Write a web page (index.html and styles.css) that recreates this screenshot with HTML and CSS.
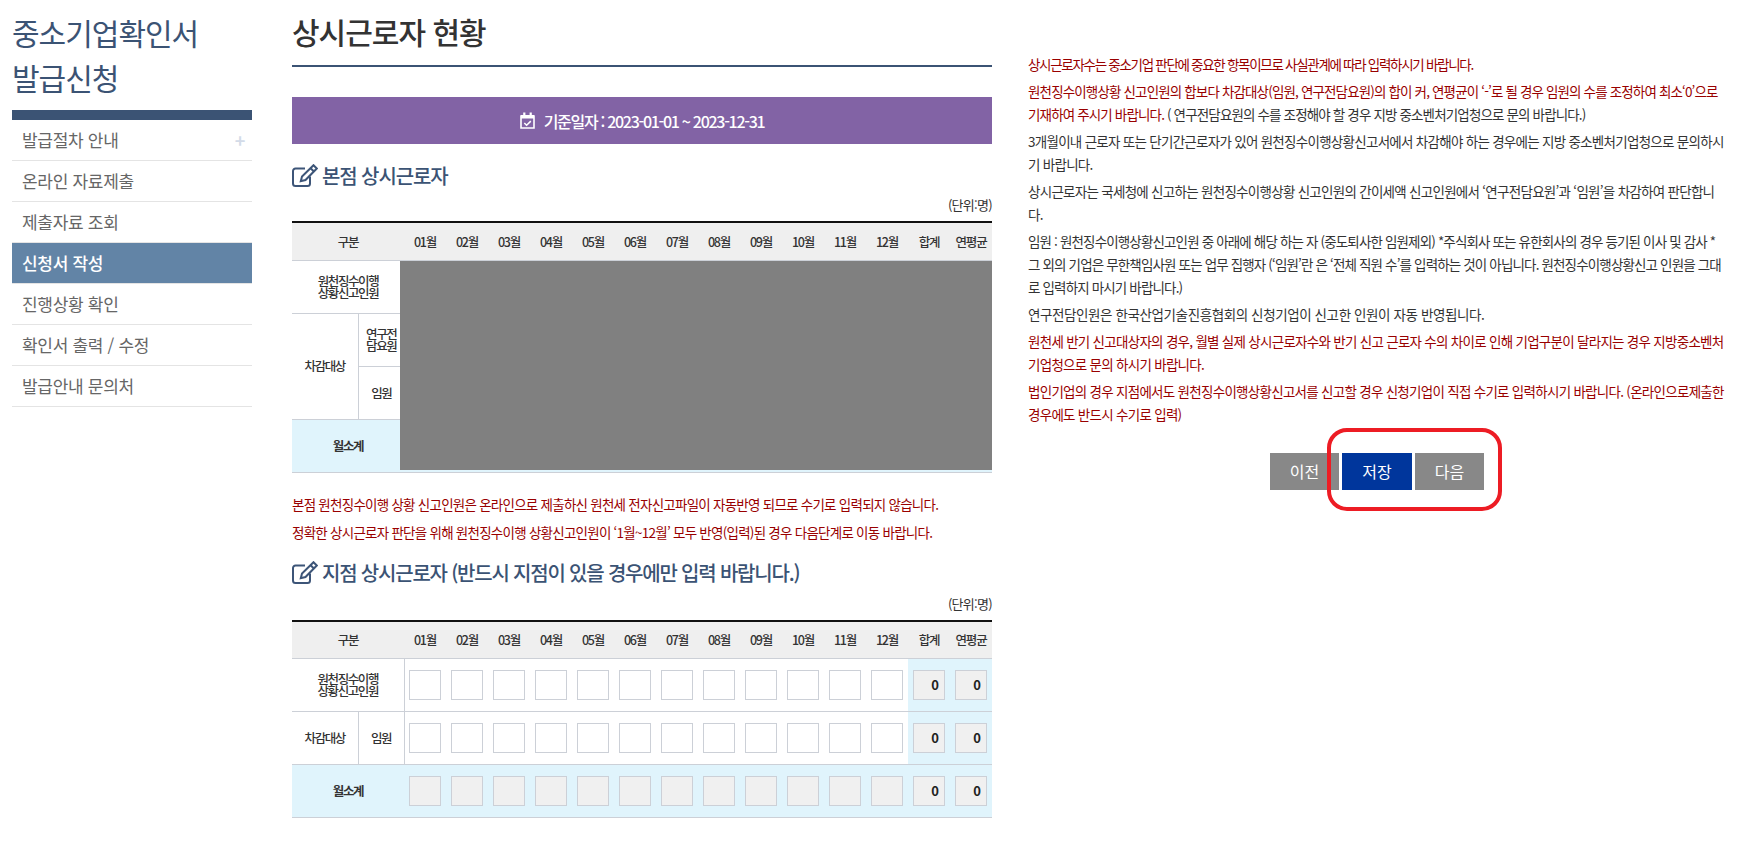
FILE: index.html
```html
<!DOCTYPE html>
<html lang="ko">
<head>
<meta charset="utf-8">
<title>상시근로자 현황</title>
<link rel="stylesheet" href="styles.css">
</head>
<body>
<div class="page">
  <aside class="side">
    <h2 class="side-title">중소기업확인서<br>발급신청</h2>
    <ul class="nav">
      <li class="nav-item has-plus">발급절차 안내<span class="plus">+</span></li>
      <li class="nav-item">온라인 자료제출</li>
      <li class="nav-item">제출자료 조회</li>
      <li class="nav-item active">신청서 작성</li>
      <li class="nav-item">진행상황 확인</li>
      <li class="nav-item">확인서 출력 / 수정</li>
      <li class="nav-item">발급안내 문의처</li>
    </ul>
  </aside>

  <main class="main">
    <h1 class="page-title">상시근로자 현황</h1>
    <div class="date-bar">
      <svg class="cal" viewBox="0 0 15 17" width="15" height="17"><path d="M1 4h13v12H1z" fill="none" stroke="#fff" stroke-width="1.600"/><path d="M1 3h13v3.500H1z M3.200 0.500h2.200v3.500H3.200z M9.600 0.500h2.200v3.500H9.600z" fill="#fff"/><path d="M4.300 11l2.300 2.300 4.200-4.200" fill="none" stroke="#fff" stroke-width="1.500"/></svg>
      <span>기준일자 : 2023-01-01 ~ 2023-12-31</span>
    </div>

    <h3 class="sec-title first"><svg class="edit" viewBox="0 0 26 23" width="26" height="23"><path d="M18 12.500v7a2.500 2.500 0 0 1-2.500 2.500H3.500A2.500 2.500 0 0 1 1 19.500V7A2.500 2.500 0 0 1 3.500 4.500H13" fill="none" stroke="#3d5578" stroke-width="2"/><path d="M21.500 1.200l3.300 3.300L13.500 16l-4.700 1.200 1.200-4.700z M18.600 4.200l3.300 3.300" fill="none" stroke="#3d5578" stroke-width="2"/></svg>본점 상시근로자</h3>
    <p class="unit">(단위:명)</p>
    <div class="table-wrap">
      <table class="grid">
        <colgroup><col class="c1"><col class="c3"><col span="14" class="cm"></colgroup>
        <thead><tr><th colspan="2">구분</th><th>01월</th><th>02월</th><th>03월</th><th>04월</th><th>05월</th><th>06월</th><th>07월</th><th>08월</th><th>09월</th><th>10월</th><th>11월</th><th>12월</th><th>합계</th><th>연평균</th></tr></thead>
        <tbody>
          <tr><td colspan="2" class="lab">원천징수이행<br>상황신고인원</td><td colspan="14"></td></tr>
          <tr><td rowspan="2" class="lab bd">차감대상</td><td class="lab">연구전<br>담요원</td><td colspan="14"></td></tr>
          <tr><td class="lab">임원</td><td colspan="14"></td></tr>
          <tr class="sum"><td colspan="2" class="lab strong">월소계</td><td colspan="14"></td></tr>
        </tbody>
      </table>
      <div class="mask"></div>
    </div>
    <p class="note n1">본점 원천징수이행 상황 신고인원은 온라인으로 제출하신 원천세 전자신고파일이 자동반영 되므로 수기로 입력되지 않습니다.</p>
    <p class="note n2">정확한 상시근로자 판단을 위해 원천징수이행 상황신고인원이 ‘1월~12월’ 모두 반영(입력)된 경우 다음단계로 이동 바랍니다.</p>

    <h3 class="sec-title second"><svg class="edit" viewBox="0 0 26 23" width="26" height="23"><path d="M18 12.500v7a2.500 2.500 0 0 1-2.500 2.500H3.500A2.500 2.500 0 0 1 1 19.500V7A2.500 2.500 0 0 1 3.500 4.500H13" fill="none" stroke="#3d5578" stroke-width="2"/><path d="M21.500 1.200l3.300 3.300L13.500 16l-4.700 1.200 1.200-4.700z M18.600 4.200l3.300 3.300" fill="none" stroke="#3d5578" stroke-width="2"/></svg>지점 상시근로자 (반드시 지점이 있을 경우에만 입력 바랍니다.)</h3>
    <p class="unit unit-low">(단위:명)</p>
    <table class="grid">
      <colgroup><col class="c1"><col class="c3"><col span="14" class="cm"></colgroup>
      <thead><tr><th colspan="2">구분</th><th>01월</th><th>02월</th><th>03월</th><th>04월</th><th>05월</th><th>06월</th><th>07월</th><th>08월</th><th>09월</th><th>10월</th><th>11월</th><th>12월</th><th>합계</th><th>연평균</th></tr></thead>
      <tbody>
        <tr>
          <td colspan="2" class="lab vr">원천징수이행<br>상황신고인원</td>
          <td><i class="box"></i></td><td><i class="box"></i></td><td><i class="box"></i></td><td><i class="box"></i></td><td><i class="box"></i></td><td><i class="box"></i></td><td><i class="box"></i></td><td><i class="box"></i></td><td><i class="box"></i></td><td><i class="box"></i></td><td><i class="box"></i></td><td><i class="box"></i></td>
          <td class="tint"><i class="box ro">0</i></td><td class="tint"><i class="box ro">0</i></td>
        </tr>
        <tr>
          <td class="lab bd">차감대상</td><td class="lab vr">임원</td>
          <td><i class="box"></i></td><td><i class="box"></i></td><td><i class="box"></i></td><td><i class="box"></i></td><td><i class="box"></i></td><td><i class="box"></i></td><td><i class="box"></i></td><td><i class="box"></i></td><td><i class="box"></i></td><td><i class="box"></i></td><td><i class="box"></i></td><td><i class="box"></i></td>
          <td class="tint"><i class="box ro">0</i></td><td class="tint"><i class="box ro">0</i></td>
        </tr>
        <tr class="sum">
          <td colspan="2" class="lab strong">월소계</td>
          <td><i class="box ro"></i></td><td><i class="box ro"></i></td><td><i class="box ro"></i></td><td><i class="box ro"></i></td><td><i class="box ro"></i></td><td><i class="box ro"></i></td><td><i class="box ro"></i></td><td><i class="box ro"></i></td><td><i class="box ro"></i></td><td><i class="box ro"></i></td><td><i class="box ro"></i></td><td><i class="box ro"></i></td>
          <td><i class="box ro">0</i></td><td><i class="box ro">0</i></td>
        </tr>
      </tbody>
    </table>
  </main>

  <section class="guide">
    <p class="red tight">상시근로자수는 중소기업 판단에 중요한 항목이므로 사실관계에 따라 입력하시기 바랍니다.</p>
    <p><span class="red">원천징수이행상황 신고인원의 합보다 차감대상(임원, 연구전담요원)의 합이 커, 연평균이 ‘-’로 될 경우 임원의 수를 조정하여 최소‘0’으로 기재하여 주시기 바랍니다.</span> ( 연구전담요원의 수를 조정해야 할 경우 지방 중소벤처기업청으로 문의 바랍니다.)</p>
    <p class="wide">3개월이내 근로자 또는 단기간근로자가 있어 원천징수이행상황신고서에서 차감해야 하는 경우에는 지방 중소벤처기업청으로 문의하시기 바랍니다.</p>
    <p class="wide">상시근로자는 국세청에 신고하는 원천징수이행상황 신고인원의 간이세액 신고인원에서 ‘연구전담요원’과 ‘임원’을 차감하여 판단합니다.</p>
    <p>임원 : 원천징수이행상황신고인원 중 아래에 해당 하는 자 (중도퇴사한 임원제외) *주식회사 또는 유한회사의 경우 등기된 이사 및 감사 * 그 외의 기업은 무한책임사원 또는 업무 집행자 (‘임원’란 은 ‘전체 직원 수’를 입력하는 것이 아닙니다. 원천징수이행상황신고 인원을 그대로 입력하지 마시기 바랍니다.)</p>
    <p class="loose">연구전담인원은 한국산업기술진흥협회의 신청기업이 신고한 인원이 자동 반영됩니다.</p>
    <p class="red wide">원천세 반기 신고대상자의 경우, 월별 실제 상시근로자수와 반기 신고 근로자 수의 차이로 인해 기업구분이 달라지는 경우 지방중소벤처기업청으로 문의 하시기 바랍니다.</p>
    <p class="red wide">법인기업의 경우 지점에서도 원천징수이행상황신고서를 신고할 경우 신청기업이 직접 수기로 입력하시기 바랍니다. (온라인으로제출한 경우에도 반드시 수기로 입력)</p>
    <div class="btns">
      <span class="btn">이전</span>
      <span class="btn save">저장</span>
      <span class="btn">다음</span>
      <span class="ring"></span>
    </div>
  </section>
</div>
</body>
</html>
```
FILE: styles.css
```css
* { box-sizing: border-box; }
html, body { margin: 0; padding: 0; background: #fff; }
body {
  font-family: "Noto Sans CJK KR", "Noto Sans", sans-serif;
  color: #333;
  overflow: hidden;
}
.page { display: flex; align-items: flex-start; height: 854px; overflow: hidden; }

.side { width: 240px; margin-left: 12px; flex: none; }
.side-title {
  margin: 10px 0 10px;
  font-size: 30px;
  font-weight: 400;
  line-height: 45px;
  letter-spacing: -1px;
  color: #3b5374;
}
.nav { list-style: none; margin: 0; padding: 0; border-top: 10px solid #3b5374; }
.nav-item {
  position: relative;
  height: 41px;
  line-height: 40px;
  padding-left: 10px;
  font-size: 17px;
  letter-spacing: -0.3px;
  color: #666;
  border-bottom: 1px solid #e4e4e4;
}
.nav-item.active { background: #6284a6; color: #fff; font-weight: 500; border-bottom-color: #e4e4e4; }
.plus { position: absolute; right: 7px; top: 0; color: #d3dbe8; font-weight: 700; font-size: 18px; }

.main { width: 700px; margin-left: 40px; flex: none; }
.page-title {
  margin: 0;
  height: 67px;
  padding-top: 9px;
  font-size: 30px;
  font-weight: 500;
  line-height: 45px;
  letter-spacing: -1px;
  color: #333;
  border-bottom: 2px solid #3b5374;
}
.date-bar {
  margin-top: 30px;
  height: 47px;
  background: #8263a5;
  color: #fff;
  display: flex;
  align-items: center;
  justify-content: center;
  gap: 9px;
  font-size: 16px;
  font-weight: 500;
  letter-spacing: -1.3px;
}
.cal { flex: none; }
.sec-title {
  display: flex;
  align-items: center;
  gap: 4px;
  margin: 0;
  height: 30px;
  font-size: 20px;
  font-weight: 500;
  letter-spacing: -1.1px;
  color: #3b5374;
}
.sec-title.first { margin-top: 16px; }
.sec-title.second { margin-top: 16px; letter-spacing: -1.2px; }
.edit { flex: none; }
.unit { margin: 0; height: 31px; padding-top: 5px; line-height: 20px; text-align: right; font-size: 13px; letter-spacing: -0.7px; color: #333; }
.unit-low { height: 32px; padding-top: 6px; }

.table-wrap { position: relative; }
.grid {
  width: 700px;
  table-layout: fixed;
  border-collapse: collapse;
  border-top: 2px solid #111;
}
.c1 { width: 66px; }
.c3 { width: 46px; }
.cm { width: 42px; }
.grid th {
  height: 38px;
  background: #efefef;
  font-size: 12.5px;
  font-weight: 500;
  letter-spacing: -1.2px;
  color: #333;
  padding: 0;
  border-bottom: 1px solid #ccd0d7;
}
.grid td {
  height: 53px;
  padding: 0;
  text-align: center;
  border-bottom: 1px solid #ccd0d7;
}
.lab { font-size: 12.5px; font-weight: 500; line-height: 12px; letter-spacing: -1.4px; color: #333; }
.lab.bd { border-right: 1px solid #ccd0d7; }
.lab.vr { border-right: 1px solid #ccd0d7; }
.lab.strong { font-weight: 700; }
.sum td, .tint { background: #e0f4fc; }
.mask { position: absolute; left: 108px; top: 40px; width: 592px; height: 209px; background: #808080; }

.box {
  display: inline-block;
  vertical-align: middle;
  width: 32px;
  height: 30px;
  border: 1px solid #ccd0d7;
  background: #fff;
  font-style: normal;
  font-size: 13px;
  font-weight: 700;
  line-height: 28px;
  text-align: right;
  padding-right: 5px;
  color: #222;
}
.box.ro { background: #f0f0f0; }

.note { margin: 0; font-size: 13.5px; line-height: 20px; letter-spacing: -0.75px; color: #990000; }
.n1 { margin-top: 21px; }
.n2 { margin-top: 8px; }

.guide { width: 698px; margin-left: 36px; flex: none; padding-top: 53px; font-size: 13.5px; letter-spacing: -0.85px; line-height: 23px; color: #333; }
.guide p { margin: 0 0 4px; }
.guide .tight { letter-spacing: -1.3px; }
.guide .wide { letter-spacing: -0.72px; }
.guide .loose { letter-spacing: -0.4px; }
.red { color: #990000; }
.btns { position: relative; display: flex; justify-content: center; gap: 3px; margin-top: 27px; }
.btn { width: 69px; height: 37px; background: #888; color: #fff; text-align: center; line-height: 36px; font-size: 16px; letter-spacing: 0; }
.btn.save { width: 70px; background: #00369c; }
.ring { position: absolute; left: 299px; top: -25px; width: 175px; height: 83px; border: 4px solid #ed1c24; border-radius: 20px; }
```
